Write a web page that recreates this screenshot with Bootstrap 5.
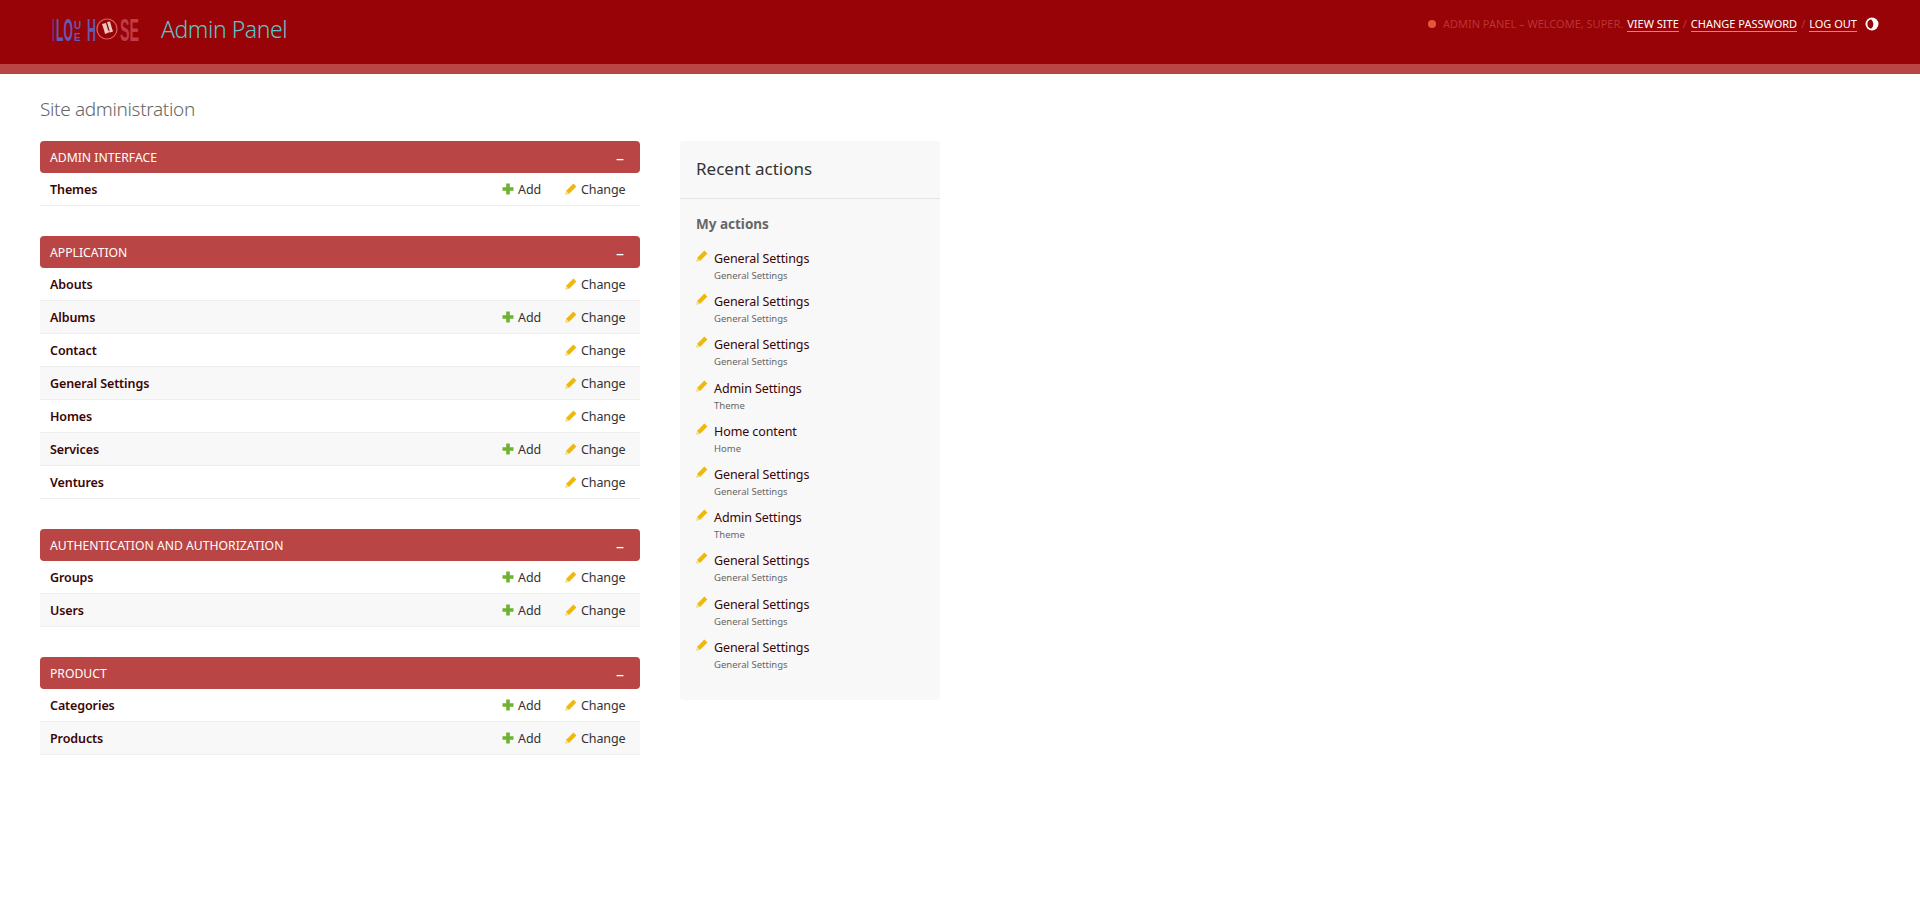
<!DOCTYPE html>
<html lang="en">

<head>
  <meta charset="UTF-8">
  <title>Site administration | Admin Panel</title>
  <meta name="viewport" content="width=device-width, initial-scale=1">
  <link href="https://cdn.jsdelivr.net/npm/bootstrap@5.3.3/dist/css/bootstrap.min.css" rel="stylesheet">
  <style>
    body {
      font-family: "Noto Sans", "Open Sans", sans-serif;
      font-size: 12px;
      color: #333;
      background: #fff;
    }

    a {
      text-decoration: none;
    }

    .top-bar {
      height: 64px;
      background: #970306;
      padding: 0 41px 6px 52px;
    }

    .top-title {
      font-size: 23px;
      font-weight: 300;
      letter-spacing: -.45px;
      color: #5cc5c9;
      margin-left: 21px;
    }

    .user-tools {
      font-size: 11px;
      text-transform: uppercase;
      color: #bd3235;
      white-space: nowrap;
      margin-bottom: 10px;
    }

    .user-tools a {
      color: #fff;
      border-bottom: 1px solid #c98a8a;
      line-height: 14px;
    }

    .user-tools .sep {
      color: #b93a3a;
      margin: 0 4px;
    }

    .status-dot {
      width: 8px;
      height: 8px;
      border-radius: 50%;
      background: #e8543c;
      margin-right: 7px;
    }

    .crumb-bar {
      height: 10px;
      background: #b94545;
    }

    .page-title {
      font-size: 19px;
      font-weight: 300;
      letter-spacing: -.35px;
      line-height: 26px;
      color: #666;
      margin: 22px 0 19px;
    }

    .page-body {
      padding: 0 40px;
    }

    .app-col {
      width: 600px;
    }

    .app-box {
      margin-bottom: 30px;
    }

    .app-head {
      height: 32px;
      background: #b94545;
      color: #fff;
      border-radius: 4px;
      padding: 2px 16px 0 10px;
      font-size: 12.2px;
      text-transform: uppercase;
    }

    .app-toggle {
      font-size: 16px;
      line-height: 1;
    }

    .model-row {
      display: grid;
      grid-template-columns: 1fr 63px 75px;
      align-items: center;
      height: 33px;
      padding: 2px 0 0 10px;
      border-bottom: 1px solid #eee;
      font-size: 12.5px;
      letter-spacing: -.1px;
      color: #333;
    }

    .model-row:nth-child(even) {
      background: #f8f8f8;
    }

    .model-name {
      font-weight: 600;
      color: #3a0505;
    }

    .model-link {
      color: #333;
      display: flex;
      align-items: center;
      gap: 4px;
    }

    .model-link svg {
      margin-top: -3px;
    }

    .side-box {
      width: 260px;
      height: 559px;
      margin-left: 40px;
      background: #f8f8f8;
      border-radius: 4px;
    }

    .side-title {
      font-size: 17px;
      line-height: 24px;
      font-weight: 400;
      color: #333;
      margin: 0;
      padding: 16px 16px 17px;
      border-bottom: 1px solid #e4e4e4;
    }

    .side-sub {
      font-size: 13.5px;
      font-weight: 700;
      line-height: 18px;
      color: #666;
      margin: 16px 16px 15px;
    }

    .action-list {
      list-style: none;
      margin: 0;
      padding: 0 16px;
    }

    .action-item {
      position: relative;
      height: 43.2px;
      padding-left: 18px;
      font-size: 12.5px;
      letter-spacing: -.1px;
      line-height: 21px;
      color: #3a0505;
    }

    .action-item svg {
      position: absolute;
      left: 0;
      top: 2px;
    }

    .action-type {
      display: block;
      font-size: 9.5px;
      letter-spacing: 0;
      line-height: 14px;
      color: #666;
    }

    .logo-mark {
      overflow: visible;
      font-family: "Liberation Sans", sans-serif;
      font-weight: 700;
    }
  </style>
</head>

<body>
  <svg width="0" height="0" class="d-block">
    <symbol id="ico-plus" viewBox="0 0 12 12">
      <path fill="#6cb32f" d="M4.2.5h3.6v3.7h3.7v3.6H7.8v3.7H4.2V7.8H.5V4.2h3.7z" />
    </symbol>
    <symbol id="ico-pencil" viewBox="0 0 12 12">
      <path fill="#efb80b" d="M8.4.6 11.4 3.6 4.2 10.8.6 11.4 1.2 7.8z" />
      <path fill="#f9dd85" d="M1.2 7.8 4.2 10.8.6 11.4z" />
    </symbol>
  </svg>

  <header class="top-bar d-flex align-items-center justify-content-between">
    <div class="d-flex align-items-center">
      <svg width="88" height="36" viewBox="0 0 88 36" class="logo-mark" role="img" aria-label="Love House">
        <text transform="translate(0 30) scale(.33 1)" font-size="32" fill="#4b3f96">I</text>
        <text transform="translate(4 30) scale(.38 1)" font-size="32" fill="#6459b4">LO</text>
        <text x="22" y="18" font-size="10" fill="#6459b4">U</text>
        <text x="22" y="30" font-size="10" fill="#6459b4">E</text>
        <text transform="translate(35 30) scale(.39 1)" font-size="32" fill="#6459b4">H</text>
        <circle cx="55" cy="18" r="10" fill="none" stroke="#d9605f" stroke-width="1.2" />
        <path fill="#e8c8c0" d="M50 13l4-1 2 7 2 2-5 2-1-4zM55 11l3-.5 2 7 1 3-3 1-1-4z" />
        <text transform="translate(68 30) scale(.446 1)" font-size="32" fill="#c23b48">SE</text>
      </svg>
      <div class="top-title">Admin Panel</div>
    </div>
    <div class="user-tools d-flex align-items-center">
      <span class="status-dot"></span>
      <span>Admin Panel &ndash; Welcome, Super.</span>
      <a href="#" class="ms-1">View site</a><span class="sep">/</span>
      <a href="#">Change password</a><span class="sep">/</span>
      <a href="#">Log out</a>
      <svg width="14" height="14" viewBox="0 0 14 14" class="ms-2">
        <circle cx="7" cy="7" r="6.5" fill="#fff" />
        <path fill="#970306" d="M6 2.2a5 5 0 0 0 0 9.6 6 6 0 0 0 0-9.6z" />
      </svg>
    </div>
  </header>
  <div class="crumb-bar"></div>

  <main class="page-body">
    <h1 class="page-title">Site administration</h1>
    <div class="d-flex align-items-start">
      <div class="app-col">
        <section class="app-box">
          <div class="app-head d-flex align-items-center justify-content-between"><span>Admin Interface</span><span class="app-toggle">&ndash;</span></div>
          <div>
            <div class="model-row"><span class="model-name">Themes</span>
              <a href="#" class="model-link"><svg width="12" height="12"><use href="#ico-plus" /></svg>Add</a>
              <a href="#" class="model-link"><svg width="12" height="12"><use href="#ico-pencil" /></svg>Change</a>
            </div>
          </div>
        </section>

        <section class="app-box">
          <div class="app-head d-flex align-items-center justify-content-between"><span>Application</span><span class="app-toggle">&ndash;</span></div>
          <div>
            <div class="model-row"><span class="model-name">Abouts</span><span></span>
              <a href="#" class="model-link"><svg width="12" height="12"><use href="#ico-pencil" /></svg>Change</a>
            </div>
            <div class="model-row"><span class="model-name">Albums</span>
              <a href="#" class="model-link"><svg width="12" height="12"><use href="#ico-plus" /></svg>Add</a>
              <a href="#" class="model-link"><svg width="12" height="12"><use href="#ico-pencil" /></svg>Change</a>
            </div>
            <div class="model-row"><span class="model-name">Contact</span><span></span>
              <a href="#" class="model-link"><svg width="12" height="12"><use href="#ico-pencil" /></svg>Change</a>
            </div>
            <div class="model-row"><span class="model-name">General Settings</span><span></span>
              <a href="#" class="model-link"><svg width="12" height="12"><use href="#ico-pencil" /></svg>Change</a>
            </div>
            <div class="model-row"><span class="model-name">Homes</span><span></span>
              <a href="#" class="model-link"><svg width="12" height="12"><use href="#ico-pencil" /></svg>Change</a>
            </div>
            <div class="model-row"><span class="model-name">Services</span>
              <a href="#" class="model-link"><svg width="12" height="12"><use href="#ico-plus" /></svg>Add</a>
              <a href="#" class="model-link"><svg width="12" height="12"><use href="#ico-pencil" /></svg>Change</a>
            </div>
            <div class="model-row"><span class="model-name">Ventures</span><span></span>
              <a href="#" class="model-link"><svg width="12" height="12"><use href="#ico-pencil" /></svg>Change</a>
            </div>
          </div>
        </section>

        <section class="app-box">
          <div class="app-head d-flex align-items-center justify-content-between"><span>Authentication and Authorization</span><span class="app-toggle">&ndash;</span></div>
          <div>
            <div class="model-row"><span class="model-name">Groups</span>
              <a href="#" class="model-link"><svg width="12" height="12"><use href="#ico-plus" /></svg>Add</a>
              <a href="#" class="model-link"><svg width="12" height="12"><use href="#ico-pencil" /></svg>Change</a>
            </div>
            <div class="model-row"><span class="model-name">Users</span>
              <a href="#" class="model-link"><svg width="12" height="12"><use href="#ico-plus" /></svg>Add</a>
              <a href="#" class="model-link"><svg width="12" height="12"><use href="#ico-pencil" /></svg>Change</a>
            </div>
          </div>
        </section>

        <section class="app-box">
          <div class="app-head d-flex align-items-center justify-content-between"><span>Product</span><span class="app-toggle">&ndash;</span></div>
          <div>
            <div class="model-row"><span class="model-name">Categories</span>
              <a href="#" class="model-link"><svg width="12" height="12"><use href="#ico-plus" /></svg>Add</a>
              <a href="#" class="model-link"><svg width="12" height="12"><use href="#ico-pencil" /></svg>Change</a>
            </div>
            <div class="model-row"><span class="model-name">Products</span>
              <a href="#" class="model-link"><svg width="12" height="12"><use href="#ico-plus" /></svg>Add</a>
              <a href="#" class="model-link"><svg width="12" height="12"><use href="#ico-pencil" /></svg>Change</a>
            </div>
          </div>
        </section>
      </div>

      <aside class="side-box">
        <h2 class="side-title">Recent actions</h2>
        <h3 class="side-sub">My actions</h3>
        <ul class="action-list">
          <li class="action-item"><svg width="12" height="12"><use href="#ico-pencil" /></svg>General Settings<span class="action-type">General Settings</span></li>
          <li class="action-item"><svg width="12" height="12"><use href="#ico-pencil" /></svg>General Settings<span class="action-type">General Settings</span></li>
          <li class="action-item"><svg width="12" height="12"><use href="#ico-pencil" /></svg>General Settings<span class="action-type">General Settings</span></li>
          <li class="action-item"><svg width="12" height="12"><use href="#ico-pencil" /></svg>Admin Settings<span class="action-type">Theme</span></li>
          <li class="action-item"><svg width="12" height="12"><use href="#ico-pencil" /></svg>Home content<span class="action-type">Home</span></li>
          <li class="action-item"><svg width="12" height="12"><use href="#ico-pencil" /></svg>General Settings<span class="action-type">General Settings</span></li>
          <li class="action-item"><svg width="12" height="12"><use href="#ico-pencil" /></svg>Admin Settings<span class="action-type">Theme</span></li>
          <li class="action-item"><svg width="12" height="12"><use href="#ico-pencil" /></svg>General Settings<span class="action-type">General Settings</span></li>
          <li class="action-item"><svg width="12" height="12"><use href="#ico-pencil" /></svg>General Settings<span class="action-type">General Settings</span></li>
          <li class="action-item"><svg width="12" height="12"><use href="#ico-pencil" /></svg>General Settings<span class="action-type">General Settings</span></li>
        </ul>
      </aside>
    </div>
  </main>

  <script src="https://cdn.jsdelivr.net/npm/bootstrap@5.3.3/dist/js/bootstrap.bundle.min.js"></script>
</body>

</html>
